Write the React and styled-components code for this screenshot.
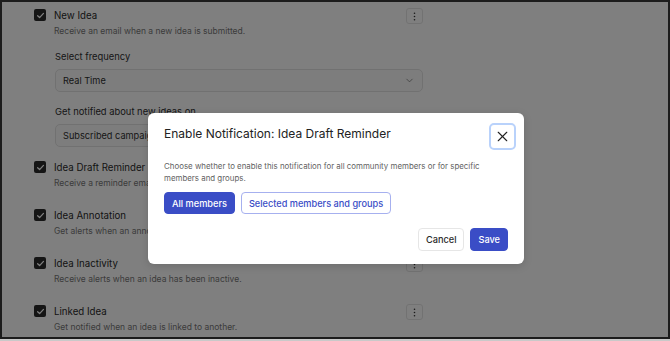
import styled, { createGlobalStyle } from "styled-components";
import { ChevronDown, X } from "lucide-react";

const GlobalStyle = createGlobalStyle`
  html, body {
    margin: 0;
    padding: 0;
    background: #c9c9c9;
  }
  body {
    font-family: Inter, "Noto Sans", sans-serif;
  }
`;

const settings = [
  { title: "New Idea", text: "Receive an email when a new idea is submitted.", open: true },
  { title: "Idea Draft Reminder", text: "Receive a reminder email when an idea has been left in draft." },
  { title: "Idea Annotation", text: "Get alerts when an annotation is added to an idea." },
  { title: "Idea Inactivity", text: "Receive alerts when an idea has been inactive." },
  { title: "Linked Idea", text: "Get notified when an idea is linked to another." },
];

const Check = () => (
  <Box>
    <svg width="9" height="9" viewBox="0 0 10 10">
      <path d="M1.8 5.2 L4 7.3 L8.3 2.6" fill="none" stroke="#fff" strokeWidth="1.4" strokeLinecap="round" strokeLinejoin="round" />
    </svg>
  </Box>
);

const Kebab = () => (
  <MenuButton>
    <svg width="3" height="9" viewBox="0 0 3 9">
      <circle cx="1.5" cy="1.2" r="0.8" fill="#333" />
      <circle cx="1.5" cy="4.5" r="0.8" fill="#333" />
      <circle cx="1.5" cy="7.8" r="0.8" fill="#333" />
    </svg>
  </MenuButton>
);

const App = () => {
  return (
    <Frame>
      <GlobalStyle />
      <List>
        {settings.map((s) => (
          <Item key={s.title}>
            <Check />
            <div>
              <TitleRow>
                <Title>{s.title}</Title>
                <Kebab />
              </TitleRow>
              <Desc>{s.text}</Desc>
              {s.open && (
                <Options>
                  <Label>Select frequency</Label>
                  <Select>
                    Real Time
                    <ChevronDown size={11} strokeWidth={1.5} color="#666" />
                  </Select>
                  <Label $top={13}>Get notified about new ideas on</Label>
                  <Select>Subscribed campaigns</Select>
                </Options>
              )}
            </div>
          </Item>
        ))}
      </List>

      <Overlay>
        <Modal>
          <Header>
            <ModalTitle>Enable Notification: Idea Draft Reminder</ModalTitle>
            <Close>
              <X size={17} strokeWidth={1.6} color="#222" />
            </Close>
          </Header>
          <ModalText>
            Choose whether to enable this notification for all community members or for specific
            members and groups.
          </ModalText>
          <Choices>
            <Button $primary>All members</Button>
            <Button $outline>Selected members and groups</Button>
          </Choices>
          <Footer>
            <Button $plain $h={23}>Cancel</Button>
            <Button $primary $h={23}>Save</Button>
          </Footer>
        </Modal>
      </Overlay>
    </Frame>
  );
};

export default App;

const Frame = styled.div`
  position: relative;
  box-sizing: border-box;
  width: 670px;
  height: 339px;
  border: 2px solid #1c1c1c;
  background: #fff;
  overflow: hidden;
`;

const List = styled.div`
  display: flex;
  flex-direction: column;
  gap: 19px;
  padding: 7px 0 0 32px;
  width: 389px;
`;

const Item = styled.div`
  display: grid;
  grid-template-columns: 12px 1fr;
  column-gap: 8px;
  align-items: start;
`;

const Box = styled.div`
  width: 12px;
  height: 12px;
  border-radius: 2px;
  background: #2a2a2a;
  display: flex;
  align-items: center;
  justify-content: center;
`;

const TitleRow = styled.div`
  display: flex;
  justify-content: space-between;
  align-items: flex-start;
  height: 14px;
`;

const Title = styled.div`
  font-size: 9.7px;
  line-height: 14px;
  color: #2a2a2a;
`;

const MenuButton = styled.div`
  box-sizing: border-box;
  width: 17px;
  height: 16px;
  margin-top: -1px;
  border: 1px solid #e4e4e4;
  border-radius: 3px;
  background: #fff;
  display: flex;
  align-items: center;
  justify-content: center;
`;

const Desc = styled.div`
  margin-top: 1px;
  font-size: 8.5px;
  line-height: 14px;
  color: #777;
`;

const Options = styled.div`
  display: flex;
  flex-direction: column;
  padding: 12px 0 0 1px;
  margin-bottom: -5px;
`;

const Label = styled.div`
  font-size: 9.4px;
  line-height: 14px;
  color: #2e2e2e;
  margin-top: ${(p) => p.$top || 0}px;
  margin-bottom: 5px;
`;

const Select = styled.div`
  box-sizing: border-box;
  height: 23px;
  padding: 0 7px;
  border: 1px solid #e2e2e2;
  border-radius: 5px;
  background: #fbfbfb;
  display: flex;
  align-items: center;
  justify-content: space-between;
  font-size: 9.2px;
  color: #2e2e2e;
  white-space: nowrap;
  overflow: hidden;
`;

const Overlay = styled.div`
  position: absolute;
  inset: 0;
  background: rgba(0, 0, 0, 0.5);
  display: flex;
  justify-content: center;
  align-items: flex-start;
  padding: 111px 0 0 2px;
`;

const Modal = styled.div`
  box-sizing: border-box;
  width: 376px;
  height: 151px;
  padding: 10px 16px 13px 16px;
  background: #fff;
  border-radius: 6px;
  box-shadow: 0 2px 8px rgba(0, 0, 0, 0.15);
  display: flex;
  flex-direction: column;
`;

const Header = styled.div`
  display: flex;
  justify-content: space-between;
  align-items: flex-start;
  margin-right: -8px;
`;

const ModalTitle = styled.div`
  font-size: 12px;
  line-height: 16px;
  padding-top: 3px;
  color: #222;
`;

const Close = styled.div`
  box-sizing: border-box;
  width: 27px;
  height: 27px;
  border: 2px solid #b9d2fb;
  border-radius: 5px;
  display: flex;
  align-items: center;
  justify-content: center;
`;

const ModalText = styled.p`
  margin: 10px 0 0;
  font-size: 7.9px;
  line-height: 12px;
  color: #5f5f5f;
`;

const Choices = styled.div`
  display: flex;
  gap: 6px;
  margin-top: 8px;
`;

const Footer = styled.div`
  display: flex;
  justify-content: flex-end;
  gap: 6px;
  margin-top: auto;
`;

const Button = styled.div`
  box-sizing: border-box;
  height: ${(p) => p.$h || 22}px;
  padding: 0 7px;
  border-radius: 4px;
  display: flex;
  align-items: center;
  font-size: 9.2px;
  font-weight: 500;
  white-space: nowrap;
  background: ${(p) => (p.$primary ? "#3a4dc6" : "#fff")};
  color: ${(p) => (p.$primary ? "#fff" : p.$outline ? "#3a4dc6" : "#2a2a2a")};
  border: 1px solid
    ${(p) => (p.$primary ? "#3a4dc6" : p.$outline ? "#a6b0ef" : "#e6e6e6")};
`;
